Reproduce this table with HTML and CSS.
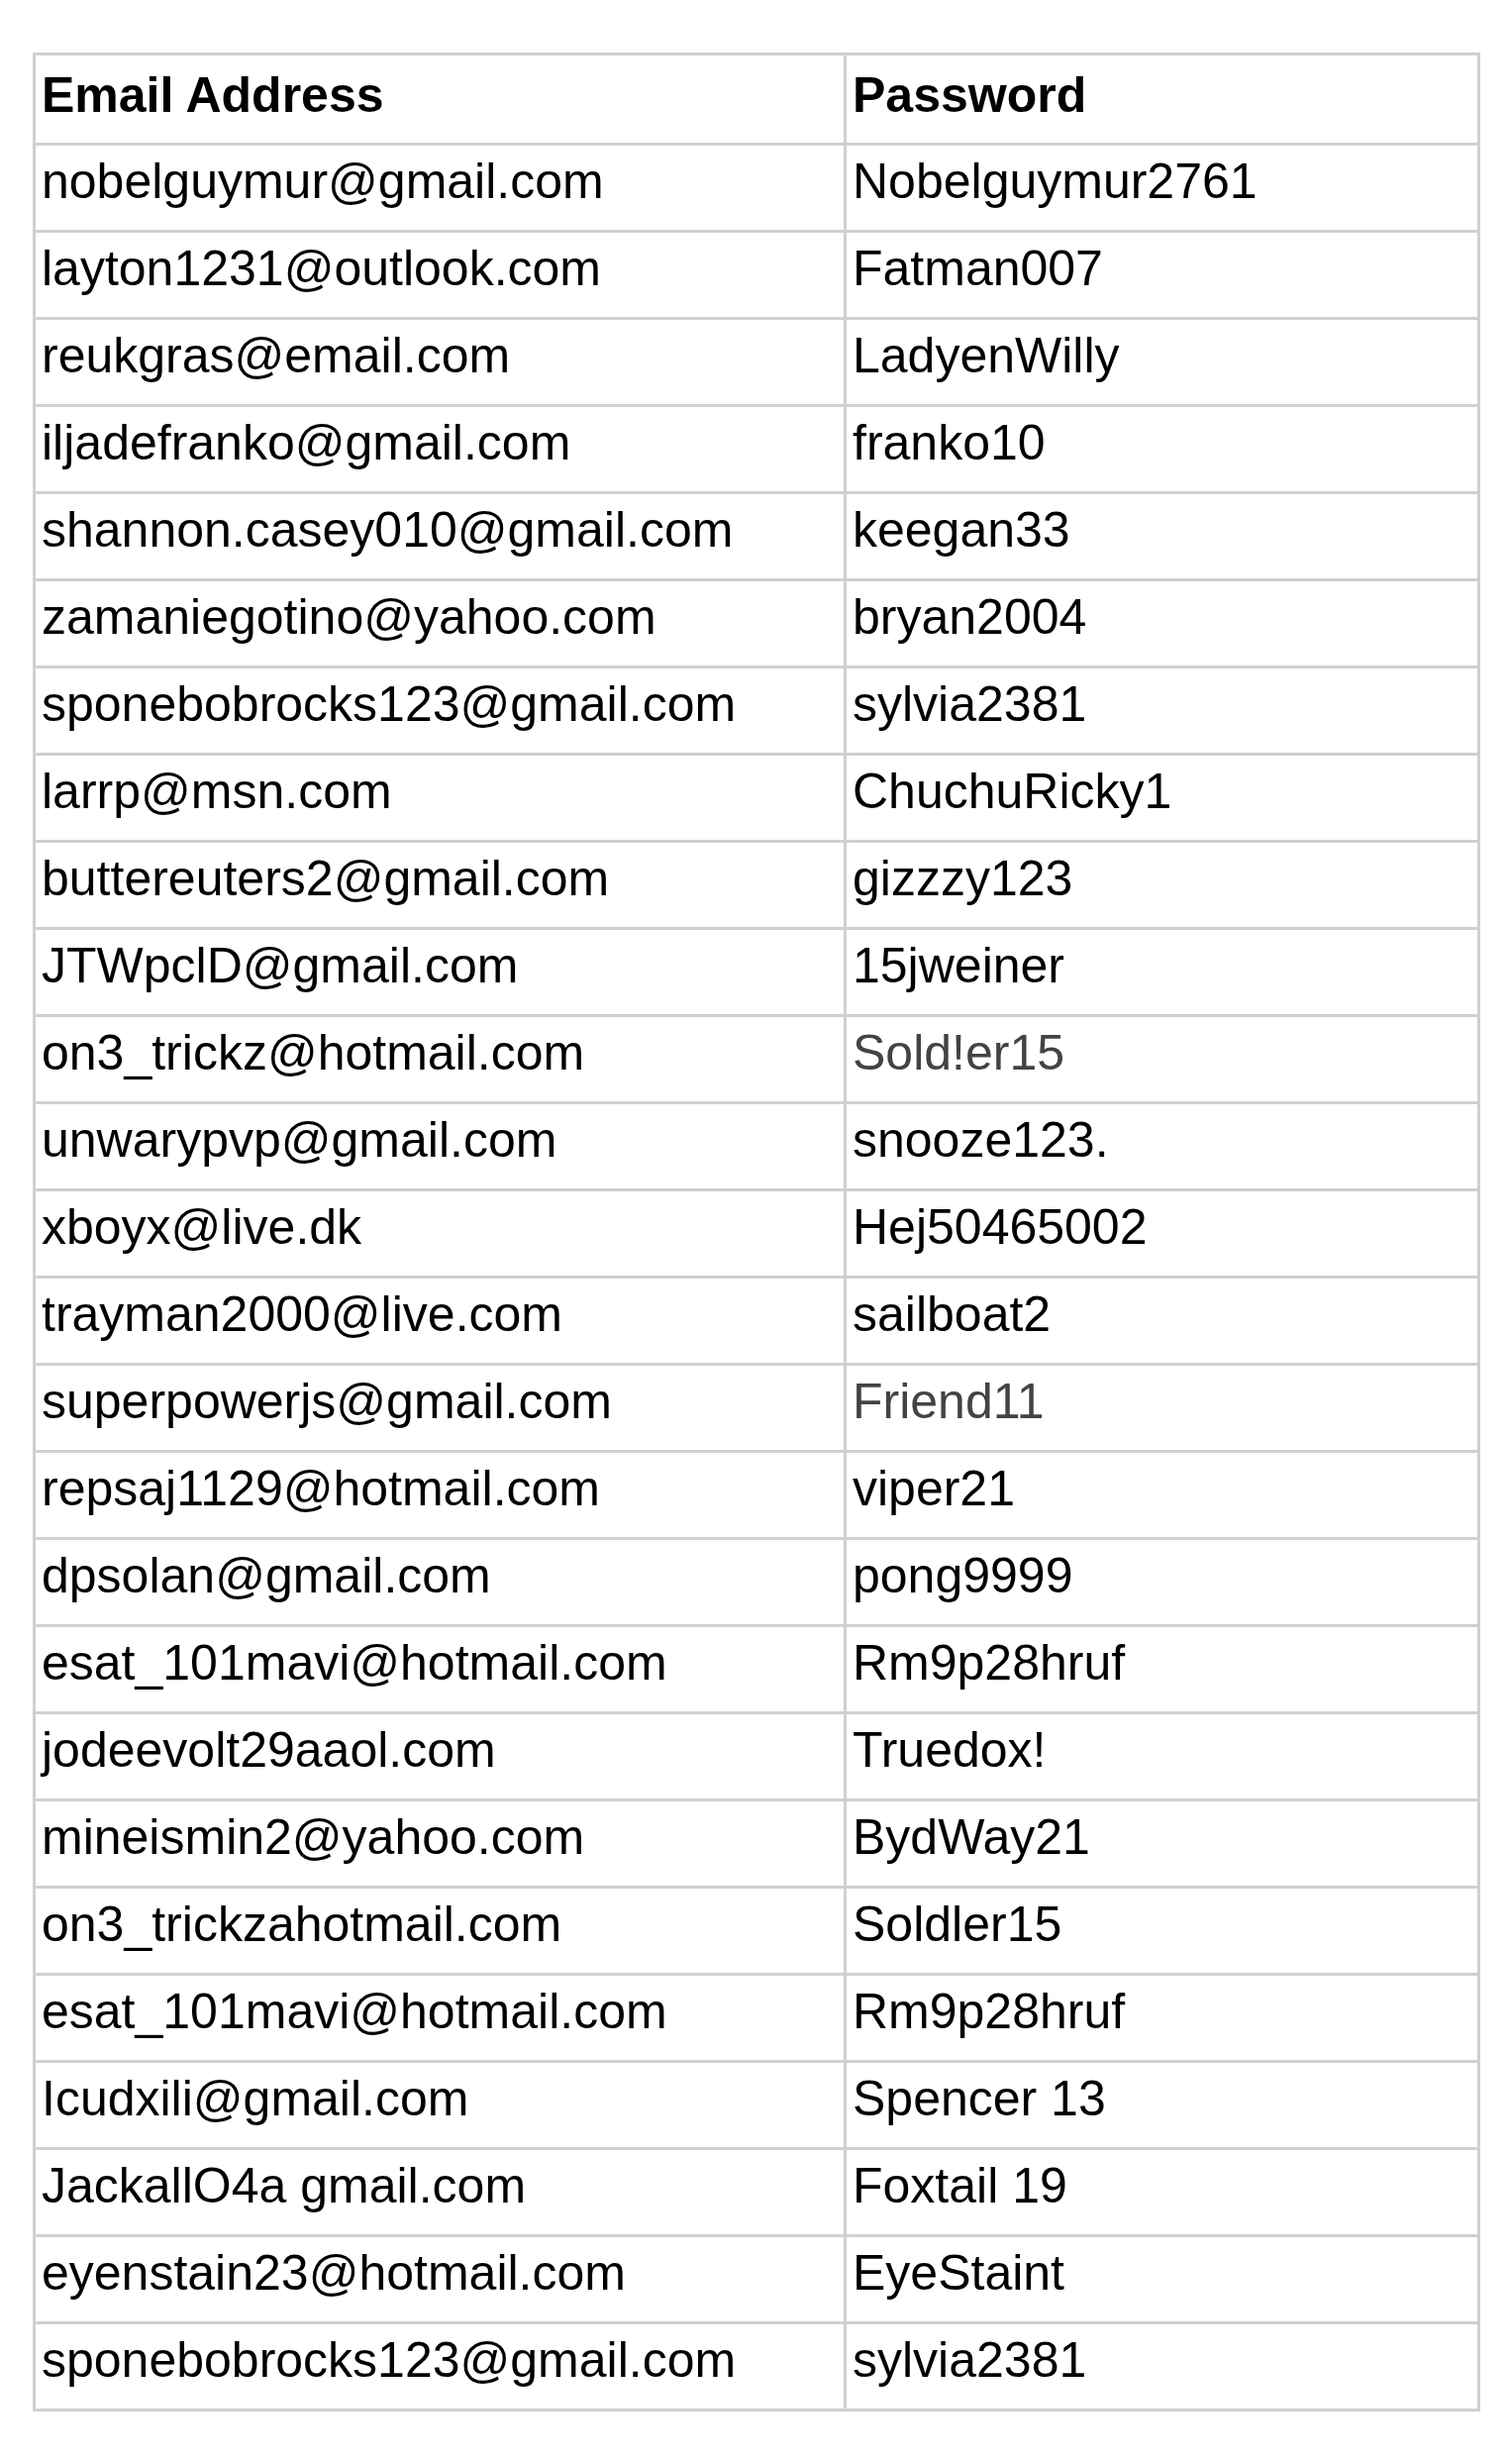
FILE: index.html
```html
<!DOCTYPE html>
<html lang="en">
<head>
<meta charset="utf-8">
<title>Accounts</title>
<link rel="stylesheet" href="styles.css">
</head>
<body>
<main class="page">
  <table class="sheet">
    <colgroup>
      <col class="col-email">
      <col class="col-pass">
    </colgroup>
    <thead>
      <tr><th>Email Address</th><th>Password</th></tr>
    </thead>
    <tbody>
      <tr><td>nobelguymur@gmail.com</td><td>Nobelguymur2761</td></tr>
      <tr><td>layton1231@outlook.com</td><td>Fatman007</td></tr>
      <tr><td>reukgras@email.com</td><td>LadyenWilly</td></tr>
      <tr><td>iljadefranko@gmail.com</td><td>franko10</td></tr>
      <tr><td>shannon.casey010@gmail.com</td><td>keegan33</td></tr>
      <tr><td>zamaniegotino@yahoo.com</td><td>bryan2004</td></tr>
      <tr><td>sponebobrocks123@gmail.com</td><td>sylvia2381</td></tr>
      <tr><td>larrp@msn.com</td><td>ChuchuRicky1</td></tr>
      <tr><td>buttereuters2@gmail.com</td><td>gizzzy123</td></tr>
      <tr><td>JTWpclD@gmail.com</td><td>15jweiner</td></tr>
      <tr><td>on3_trickz@hotmail.com</td><td class="muted">Sold!er15</td></tr>
      <tr><td>unwarypvp@gmail.com</td><td>snooze123.</td></tr>
      <tr><td>xboyx@live.dk</td><td>Hej50465002</td></tr>
      <tr><td>trayman2000@live.com</td><td>sailboat2</td></tr>
      <tr><td>superpowerjs@gmail.com</td><td class="muted">Friend11</td></tr>
      <tr><td>repsaj1129@hotmail.com</td><td>viper21</td></tr>
      <tr><td>dpsolan@gmail.com</td><td>pong9999</td></tr>
      <tr><td>esat_101mavi@hotmail.com</td><td>Rm9p28hruf</td></tr>
      <tr><td>jodeevolt29aaol.com</td><td>Truedox!</td></tr>
      <tr><td>mineismin2@yahoo.com</td><td>BydWay21</td></tr>
      <tr><td>on3_trickzahotmail.com</td><td>Soldler15</td></tr>
      <tr><td>esat_101mavi@hotmail.com</td><td>Rm9p28hruf</td></tr>
      <tr><td>Icudxili@gmail.com</td><td>Spencer 13</td></tr>
      <tr><td>JackallO4a gmail.com</td><td>Foxtail 19</td></tr>
      <tr><td>eyenstain23@hotmail.com</td><td>EyeStaint</td></tr>
      <tr><td>sponebobrocks123@gmail.com</td><td>sylvia2381</td></tr>
    </tbody>
  </table>
</main>
</body>
</html>
```
FILE: styles.css
```css
html, body {
  margin: 0;
  padding: 0;
  background: #ffffff;
}

.page {
  padding: 53px 0 0 33px;
}

.sheet {
  border-collapse: separate;
  border-spacing: 0;
  table-layout: fixed;
  width: 1462px;
  border-top: 3px solid #d0d0d0;
  border-left: 3px solid #d0d0d0;
  font-family: "Liberation Sans", Arial, sans-serif;
  font-size: 50px;
  line-height: 56px;
  color: #000000;
}

.col-email { width: 819px; }
.col-pass { width: 640px; }

.sheet th,
.sheet td {
  box-sizing: border-box;
  text-align: left;
  vertical-align: top;
  white-space: nowrap;
  border-right: 3px solid #d0d0d0;
  border-bottom: 3px solid #d0d0d0;
}

.sheet th {
  font-weight: bold;
  height: 91px;
  padding: 12px 6px 20px;
}

.sheet td {
  font-weight: normal;
  height: 88px;
  padding: 8px 6px 21px;
}

.sheet td.muted {
  color: #434343;
}
```
